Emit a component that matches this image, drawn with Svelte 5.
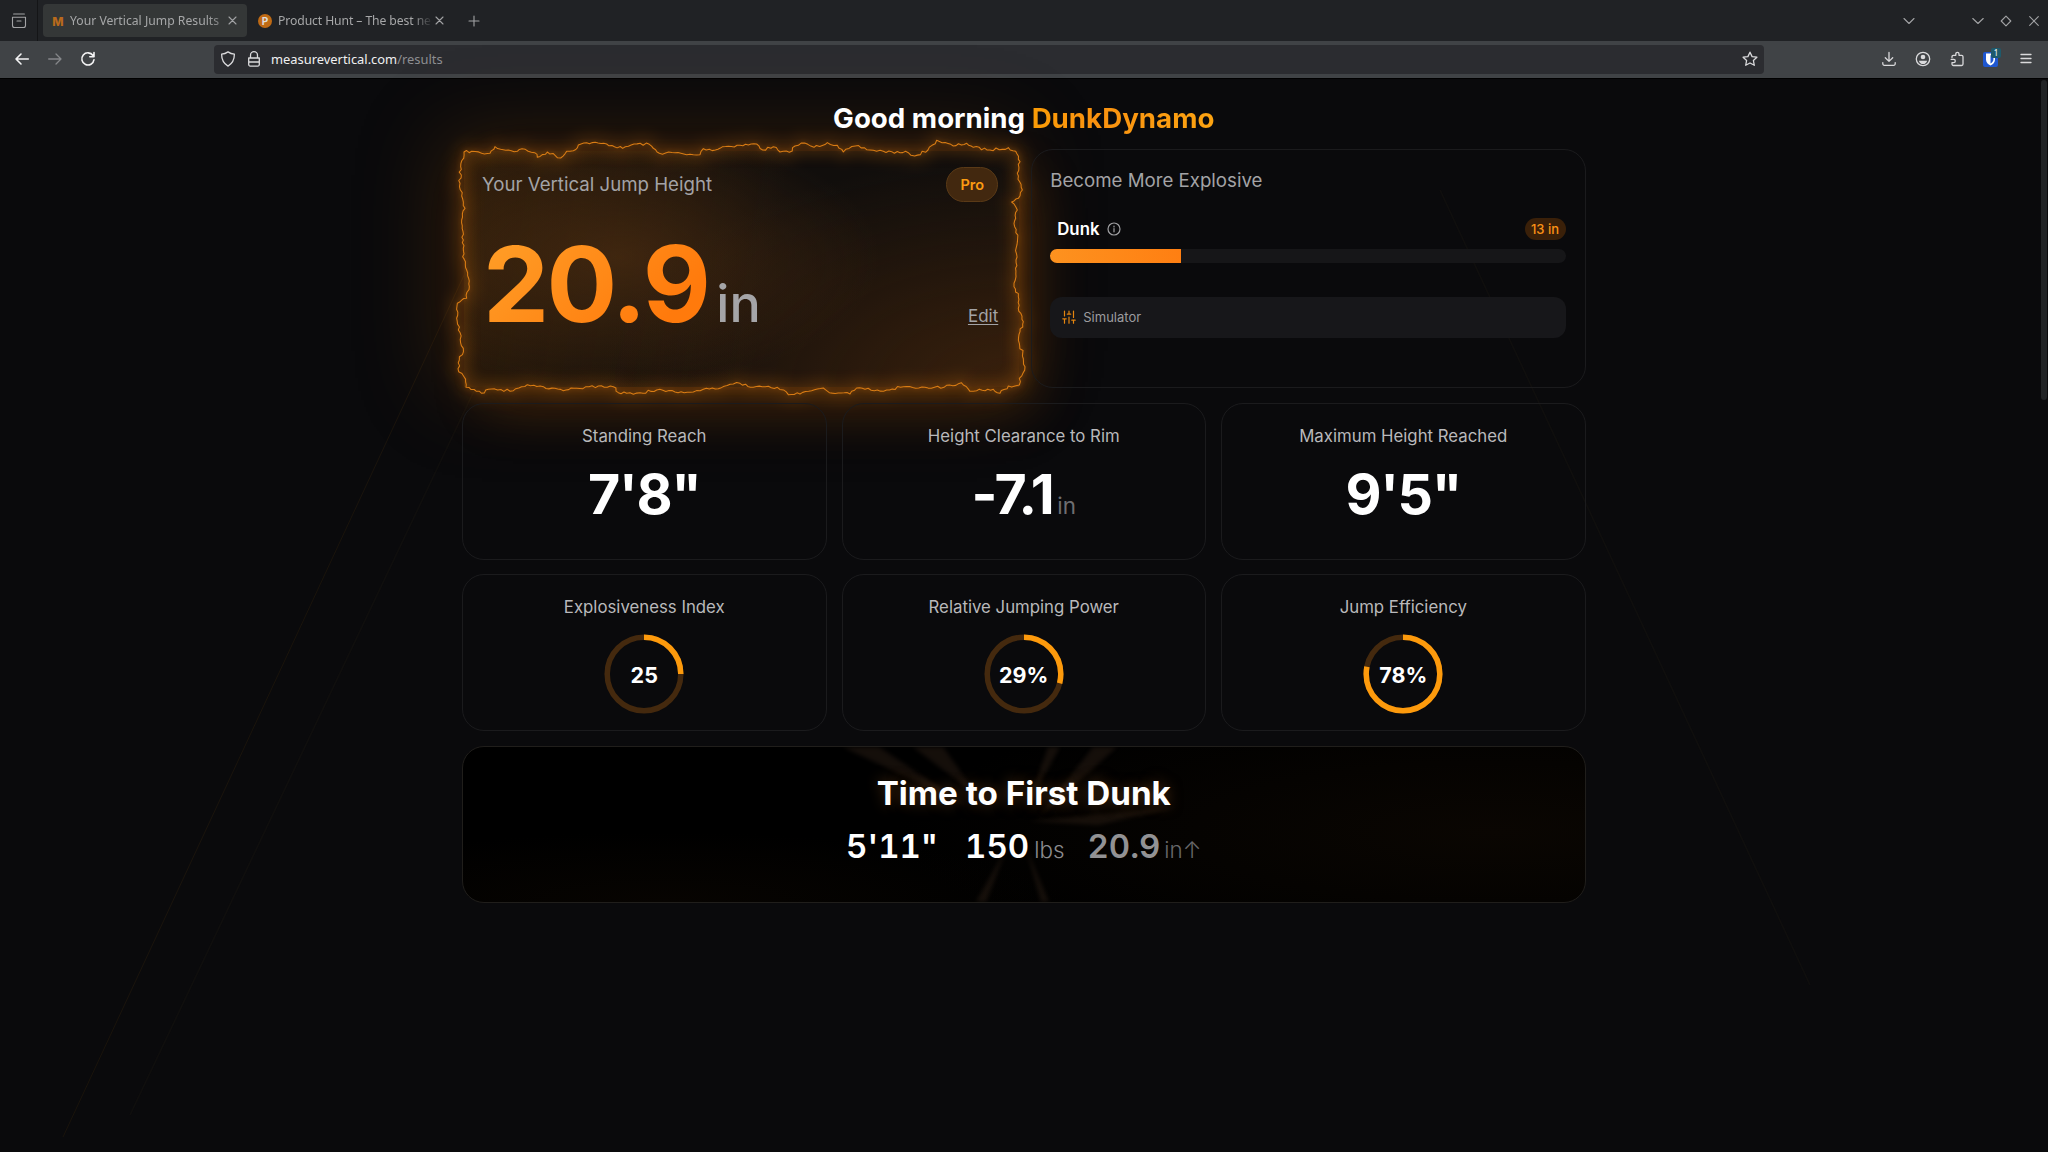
<script>
    const stats = [
        { label: 'Standing Reach', value: '7\'8"' },
        { label: 'Height Clearance to Rim', value: '-7.1', unit: 'in' },
        { label: 'Maximum Height Reached', value: '9\'5"' }
    ];

    const gauges = [
        { label: 'Explosiveness Index', percent: 25, text: '25' },
        { label: 'Relative Jumping Power', percent: 29, text: '29%' },
        { label: 'Jump Efficiency', percent: 78, text: '78%' }
    ];

    const dunkProgress = 25.4;

    const radius = 36.8;
    const circumference = 2 * Math.PI * radius;

    // corner points of the electric border, clockwise from top left
    const bolt = [
        [72,66],[95,64],[125,70],[150,70],[165,50],[182,58],[205,60],[232,64],[246,56],[284,68],[292,82],[322,66],[362,84],
        [380,64],[400,62],[415,45],[440,38],[500,42],[548,55],[582,42],[628,43],[640,55],[658,70],[705,68],[740,74],[780,74],
        [790,56],[826,60],[848,50],[900,46],[950,42],[968,60],[1000,50],[1020,66],[1048,67],[1065,48],[1094,39],[1122,52],
        [1162,38],[1192,46],[1210,66],[1246,48],[1290,60],[1330,64],[1380,68],[1405,68],[1424,78],[1464,60],[1476,46],
        [1490,31],[1540,48],[1580,40],[1600,52],[1650,60],[1705,53],[1727,64],
        [1740,95],[1732,130],[1747,180],[1735,205],[1715,216],[1732,240],[1724,290],[1733,325],[1728,390],[1728,440],
        [1722,470],[1735,500],[1735,535],[1750,575],[1740,605],[1738,640],[1748,670],[1755,710],[1738,745],[1738,765],
        [1725,768],[1705,768],[1680,790],[1660,778],[1610,782],[1590,784],[1564,758],[1512,772],[1455,772],[1390,770],
        [1340,780],[1275,778],[1250,774],[1230,792],[1168,788],[1150,774],[1080,792],[1045,794],[1012,772],[940,772],
        [900,760],[880,762],[835,776],[790,778],[760,786],[705,786],[650,780],[600,788],[560,790],[535,788],[520,770],
        [475,768],[410,775],[370,782],[310,770],[262,764],[220,782],[145,778],[125,790],[78,772],
        [72,740],[56,725],[58,690],[70,655],[55,600],[52,520],[80,505],[88,470],[80,420],[68,380],[70,330],[65,270],
        [75,235],[60,160],[62,110]
    ];

    // splits each segment and nudges the new points sideways
    function jagged(points) {
        let seed = 7;
        const random = () => {
            seed = (seed * 16807) % 2147483647;
            return seed / 2147483647 - 0.5;
        };
        const out = [];
        points.forEach(([x, y], i) => {
            const [nx, ny] = points[(i + 1) % points.length];
            const length = Math.hypot(nx - x, ny - y);
            const steps = Math.max(1, Math.round(length / 9));
            out.push([x, y]);
            for (let s = 1; s < steps; s++) {
                const t = s / steps;
                const push = random() * 8;
                out.push([
                    x + (nx - x) * t - ((ny - y) / length) * push,
                    y + (ny - y) * t + ((nx - x) / length) * push
                ]);
            }
        });
        return 'M' + out.map(p => p.map(n => n.toFixed(1)).join(' ')).join('L') + 'Z';
    }

    const boltPath = jagged(bolt);
</script>

<div class="window">
    <header class="tabs">
        <div class="tab-tools">
            <svg class="line" width="16" height="16" viewBox="0 0 16 16"><path d="M2.6 1h10.8M1.5 4.2h13v8.3a2 2 0 0 1-2 2h-9a2 2 0 0 1-2-2zM6 8h4" /></svg>
        </div>
        <div class="tab active">
            <svg class="favicon" width="14" height="14" viewBox="0 0 14 14"><text class="mark" x="1.3" y="11.6">M</text></svg>
            <span class="tab-title">Your Vertical Jump Results</span>
            <svg class="line" width="9" height="9" viewBox="0 0 9 9"><path d="M1 1l7 7M8 1l-7 7" /></svg>
        </div>
        <div class="tab">
            <span class="hunt">P</span>
            <span class="tab-title long">Product Hunt – The best ne</span>
            <svg class="line" width="9" height="9" viewBox="0 0 9 9"><path d="M1 1l7 7M8 1l-7 7" /></svg>
        </div>
        <svg class="line new-tab" width="12" height="12" viewBox="0 0 12 12"><path d="M6 1v10M1 6h10" /></svg>
        <div class="window-buttons">
            <svg class="line all-tabs" width="12" height="12" viewBox="0 0 12 12"><path d="M1 3.5l5 5 5-5" /></svg>
            <svg class="line" width="12" height="12" viewBox="0 0 12 12"><path d="M.8 3.5l5.2 5 5.2-5" /></svg>
            <svg class="line" width="12" height="12" viewBox="0 0 12 12"><path d="M6 1.2L10.8 6 6 10.8 1.2 6z" /></svg>
            <svg class="line" width="12" height="12" viewBox="0 0 12 12"><path d="M1.7 1.7l8.6 8.6M10.3 1.7l-8.6 8.6" /></svg>
        </div>
    </header>

    <nav class="toolbar">
        <div class="nav-buttons">
            <svg class="line bold" width="16" height="16" viewBox="0 0 16 16"><path d="M14.3 8H2M7 3L2 8l5 5" /></svg>
            <svg class="line dim" width="16" height="16" viewBox="0 0 16 16"><path d="M1.7 8H14M9 3l5 5-5 5" /></svg>
            <svg class="line bold" width="16" height="16" viewBox="0 0 16 16"><path d="M13 4.5A6.1 6.1 0 1 0 14 8.7M14 1.6v4.2H9.8" /></svg>
        </div>
        <div class="address">
            <svg class="line" width="16" height="16" viewBox="0 0 16 16"><path d="M8 .9c2 1.4 4.2 2.1 6.4 2.2 0 5.4-1.5 9.3-6.4 12C3.1 12.4 1.6 8.5 1.6 3.1 3.8 3 6 2.3 8 .9z" /></svg>
            <svg class="line" width="16" height="16" viewBox="0 0 16 16"><path d="M4.5 7V4.2a3.5 3.5 0 0 1 7 0V7M2.7 7h10.6v6.6a1.5 1.5 0 0 1-1.5 1.5H4.2a1.5 1.5 0 0 1-1.5-1.5zM3 11h10" /></svg>
            <span class="url">measurevertical.com<span class="path">/results</span></span>
            <svg class="line star" width="16" height="16" viewBox="0 0 16 16"><path d="M8 1.2l2.1 4.4 4.8.6-3.5 3.3.9 4.8L8 12l-4.3 2.3.9-4.8L1.1 6.2l4.8-.6z" /></svg>
        </div>
        <div class="actions">
            <svg class="line" width="16" height="16" viewBox="0 0 16 16"><path d="M8 1.5v8.8M4.3 6.8L8 10.4l3.7-3.6M1.8 11.6v1.2a1.5 1.5 0 0 0 1.5 1.5h9.4a1.5 1.5 0 0 0 1.5-1.5v-1.2" /></svg>
            <svg class="line" width="16" height="16" viewBox="0 0 16 16"><circle cx="8" cy="8" r="6.7" /><circle class="solid" cx="8" cy="6" r="2.3" /><path class="solid" d="M3.8 9.7h8.4c-.7 2.3-2.3 3.4-4.2 3.4s-3.5-1.1-4.2-3.4z" /></svg>
            <svg class="line" width="16" height="16" viewBox="0 0 16 16"><path d="M3 6.6V5.8c0-1 .5-1.5 1.4-1.5h2.4V2.9a1.6 1.6 0 0 1 3.2 0v1.4h2.6a1.4 1.4 0 0 1 1.4 1.4v7.4a1.4 1.4 0 0 1-1.4 1.4H4.4A1.4 1.4 0 0 1 3 13.1v-1.5h1.7a1.6 1.6 0 0 0 0-3.2H2.2" /></svg>
            <span class="vault">
                <svg width="15" height="15" viewBox="0 0 15 15"><rect width="15" height="15" rx="2" fill="#1f57d0" /><path d="M3 1.5h9v6c0 3-2 4.800-4.500 6C5 12.300 3 10.500 3 7.500z" fill="#fff" /><path d="M7.500 3.200h2.900v4.300c0 1.800-1.200 3-2.900 4z" fill="#1f57d0" /></svg>
                <span class="count">1</span>
            </span>
            <svg class="line" width="16" height="16" viewBox="0 0 16 16"><path d="M3 3.5h10M3 7.5h10M3 11.5h10" /></svg>
        </div>
    </nav>

    <main>
        <svg class="court" width="2048" height="1073" viewBox="0 79 2048 1073">
            <path d="M520 155L63 1137" />
            <path class="faint" d="M560 210L130 1115" />
            <path class="faint" d="M1440 190L1810 985" />
        </svg>
        <div class="scrollbar"></div>

        <h1>Good morning <span>DunkDynamo</span></h1>

        <div class="row two">
            <section class="hero">
                <div class="hero-fill"></div>
                <svg class="bolt" width="600" height="270" viewBox="0 0 1800 810">
                    <path class="glow wide" d={boltPath} />
                    <path class="glow" d={boltPath} />
                    <path d={boltPath} />
                </svg>
                <div class="hero-head">
                    <h2>Your Vertical Jump Height</h2>
                    <span class="pro">Pro</span>
                </div>
                <div class="hero-body">
                    <p class="jump"><b>20.9</b><span>in</span></p>
                    <a class="edit" href="#edit">Edit</a>
                </div>
            </section>

            <section class="card goals">
                <h2>Become More Explosive</h2>
                <div class="goal">
                    <strong>Dunk</strong>
                    <svg class="info" width="14" height="14" viewBox="0 0 14 14"><circle cx="7" cy="7" r="6" /><path d="M7 6.5v3.3M7 4.1v.8" /></svg>
                    <span class="remaining">13 in</span>
                </div>
                <div class="track"><div class="fill" style="width: {dunkProgress}%"></div></div>
                <button>
                    <svg width="14" height="14" viewBox="0 0 14 14"><path d="M2.5 1v5M2.5 9v4.2M7 1v3M7 7v6.2M11.5 1v6.5M11.5 10.5v2.7M.8 8.8h3.4M5.3 4.2h3.4M9.8 10.2h3.4" /></svg>
                    Simulator
                </button>
            </section>
        </div>

        <div class="row three">
            {#each stats as stat}
                <section class="card stat">
                    <h3>{stat.label}</h3>
                    <p>{stat.value}{#if stat.unit}<small>{stat.unit}</small>{/if}</p>
                </section>
            {/each}
        </div>

        <div class="row three">
            {#each gauges as gauge}
                <section class="card stat">
                    <h3>{gauge.label}</h3>
                    <div class="gauge">
                        <svg width="80" height="80" viewBox="0 0 80 80">
                            <circle cx="40" cy="40" r={radius} />
                            <circle
                                class="value"
                                cx="40"
                                cy="40"
                                r={radius}
                                stroke-dasharray="{circumference * gauge.percent / 100} {circumference}"
                            />
                        </svg>
                        <span>{gauge.text}</span>
                    </div>
                </section>
            {/each}
        </div>

        <section class="card dunk">
            <svg class="rays" width="1122" height="155" viewBox="0 0 1122 155">
                <path d="M450 0h30l36 50z" />
                <path d="M380 0h36l90 60z" />
                <path d="M585 0h12l-34 62z" />
                <path d="M630 0h24l-80 72z" />
                <path d="M565 74l150-14-80 18z" />
                <path d="M545 98l-32 57h10z" />
                <path d="M562 98l24 57h-8z" />
            </svg>
            <h2>Time to First Dunk</h2>
            <div class="facts">
                <span class="fact">5'11"</span>
                <span class="fact">150<small>lbs</small></span>
                <span class="fact muted">20.9<small>in↑</small></span>
            </div>
        </section>
    </main>
</div>

<style>
    :global(body) {
        margin: 0;
        background: #0a0a0c;
    }

    .window {
        display: flex;
        flex-direction: column;
        width: 2048px;
        height: 1152px;
        overflow: hidden;
        background: #0a0a0c;
        color: #fff;
        font-family: Inter, sans-serif;
    }

    h1, h2, h3, p {
        margin: 0;
    }

    .line {
        flex: none;
        fill: none;
        stroke: #dadadc;
        stroke-width: 1.3;
        stroke-linecap: round;
        stroke-linejoin: round;
    }

    .line.bold {
        stroke: #f4f4f5;
        stroke-width: 1.6;
    }

    .line.dim {
        stroke: #85878a;
    }

    .line .solid {
        fill: #dadadc;
        stroke: none;
    }

    /* browser chrome */
    .tabs {
        display: flex;
        align-items: center;
        height: 41px;
        background: #202225;
        font: 12.2px/16px 'Noto Sans', sans-serif;
        color: #a6a7a8;
    }

    .tabs .line {
        stroke: #a2a3a5;
        stroke-width: 1.1;
    }

    .tab-tools {
        display: flex;
        align-items: center;
        justify-content: center;
        width: 37px;
        height: 41px;
        margin-right: 5px;
        border-right: 1px solid #141517;
    }

    .tab {
        box-sizing: border-box;
        display: flex;
        align-items: center;
        width: 204px;
        height: 33px;
        margin-right: 3px;
        padding: 0 10px 0 8px;
        border-radius: 4px;
    }

    .tab.active {
        background: #343737;
    }

    .favicon,
    .hunt {
        flex: none;
        margin-right: 5px;
    }

    .mark {
        font: 800 12px Inter, sans-serif;
        fill: #b96a1c;
    }

    .hunt {
        width: 14px;
        height: 14px;
        margin-right: 6px;
        border-radius: 50%;
        background: #bf6a14;
        color: #ddd;
        font: 700 10px/14px Inter, sans-serif;
        text-align: center;
    }

    .tab-title {
        flex: 1;
        margin-right: 4px;
        white-space: nowrap;
        mask-image: linear-gradient(90deg, #000 88%, rgba(0, 0, 0, 0.5));
    }

    .tab-title.long {
        letter-spacing: -0.1px;
        mask-image: linear-gradient(90deg, #000 88%, rgba(0, 0, 0, 0.1));
    }

    .new-tab {
        margin-left: 11px;
    }

    .window-buttons {
        display: flex;
        gap: 16px;
        margin-left: auto;
        padding-right: 8px;
    }

    .all-tabs {
        margin-right: 41px;
    }

    .toolbar {
        box-sizing: border-box;
        display: flex;
        align-items: center;
        height: 38px;
        padding-bottom: 1px;
        background: #404346;
        border-bottom: 1px solid #000;
    }

    .nav-buttons {
        display: flex;
        gap: 17px;
        width: 200px;
        padding-left: 14px;
    }

    .address {
        box-sizing: border-box;
        display: flex;
        align-items: center;
        width: 1550px;
        height: 29px;
        padding: 0 6px;
        border-radius: 4px;
        background: #2b2c30;
    }

    .address .line + .line {
        margin-left: 10px;
    }

    .url {
        margin-left: 9px;
        color: #f0f0f1;
        font: 12.9px/18px 'Noto Sans', sans-serif;
    }

    .path {
        color: #8e8f92;
    }

    .address .star {
        margin-left: auto;
    }

    .actions {
        display: flex;
        align-items: center;
        gap: 18px;
        margin-left: auto;
        padding-right: 14px;
    }

    .vault {
        position: relative;
        display: flex;
        width: 15px;
        margin-right: 2px;
    }

    .count {
        position: absolute;
        top: -4px;
        right: -3px;
        width: 10px;
        height: 10px;
        border-radius: 2px;
        background: #1e5a6c;
        font: 8px/10px 'Noto Sans', sans-serif;
        text-align: center;
    }

    /* page */
    main {
        position: relative;
        flex: 1;
        padding: 18px 462.5px 0 462px;
    }

    .court {
        position: absolute;
        top: 0;
        left: 0;
        fill: none;
        stroke: #1a140c;
    }

    .court .faint {
        stroke: #100f0e;
        stroke-width: 1.5;
    }

    .scrollbar {
        position: absolute;
        top: 1px;
        right: 1px;
        width: 6px;
        height: 320px;
        border-radius: 3px;
        background: #212325;
    }

    h1 {
        position: relative;
        z-index: 1;
        margin-bottom: 9px;
        font-size: 27.7px;
        font-weight: 700;
        line-height: 43px;
        text-align: center;
    }

    h1 span {
        background: linear-gradient(90deg, #fb9c06, #fa9210 35%, #fca311);
        background-clip: text;
        color: transparent;
    }

    .row {
        display: grid;
        gap: 15px;
        margin-bottom: 14px;
    }

    .two {
        grid-template-columns: 1fr 1fr;
        height: 239px;
        margin-bottom: 15px;
    }

    .three {
        grid-template-columns: repeat(3, 1fr);
        height: 157px;
    }

    .card {
        position: relative;
        box-sizing: border-box;
        border: 1px solid #1b1b1d;
        border-radius: 22px;
    }

    h2 {
        color: #a3a3a6;
        font-size: 18.67px;
        font-weight: 400;
        line-height: 24px;
    }

    .hero {
        position: relative;
        box-sizing: border-box;
        display: flex;
        flex-direction: column;
        padding: 18px 18px 0 20px;
    }

    .hero-fill {
        position: absolute;
        inset: 2px -3px 1px 2px;
        background:
            radial-gradient(ellipse 260px 130px at 28% 45%, rgba(86, 50, 18, 0.6), transparent),
            radial-gradient(ellipse 420px 230px at 100% 100%, rgba(74, 40, 12, 0.7), transparent),
            linear-gradient(100deg, rgba(70, 40, 8, 0.5), transparent 55%),
            #110e0c;
        box-shadow:
            0 0 10px rgba(190, 95, 10, 0.16),
            -12px -6px 80px 10px rgba(150, 78, 8, 0.26),
            18px 26px 50px -6px rgba(170, 85, 8, 0.26),
            inset 0 0 18px rgba(170, 84, 8, 0.18);
    }

    .bolt {
        position: absolute;
        top: -19px;
        left: -22px;
        fill: none;
        overflow: visible;
        stroke: #d97c14;
        stroke-width: 3.2;
        stroke-linejoin: round;
    }

    .glow {
        opacity: 0.16;
        stroke-width: 9;
        filter: blur(6px);
    }

    .glow.wide {
        opacity: 0.15;
        stroke-width: 50;
        filter: blur(20px);
    }

    .hero-head,
    .hero-body {
        position: relative;
        display: flex;
        align-items: center;
        justify-content: space-between;
    }

    .pro {
        box-sizing: border-box;
        width: 52px;
        height: 35px;
        border: 1px solid #5a3a17;
        border-radius: 18px;
        background: #42280f;
        color: #fb9b12;
        font-size: 14.5px;
        font-weight: 600;
        line-height: 33px;
        text-align: center;
    }

    .hero-body {
        align-items: baseline;
        margin-top: 19px;
        padding-left: 1px;
    }

    .jump {
        font-size: 105px;
        line-height: 125px;
        white-space: nowrap;
    }

    .jump b {
        background: linear-gradient(135deg, #ff9a24 15%, #ff7a0c 80%);
        background-clip: text;
        color: transparent;
        font-weight: 700;
        letter-spacing: -0.025em;
    }

    .jump span {
        margin-left: 8px;
        color: #a5a5a8;
        font-size: 52px;
        font-weight: 500;
    }

    .edit {
        color: #a3a3a6;
        font-size: 17px;
        text-underline-offset: 2px;
    }

    .goals {
        display: flex;
        flex-direction: column;
        padding: 19px 19px 0 18px;
    }

    .goal {
        display: flex;
        align-items: center;
        height: 22px;
        margin-top: 25px;
        padding-left: 7px;
    }

    .goal strong {
        font-size: 16.8px;
        font-weight: 600;
    }

    .info,
    button svg {
        fill: none;
        stroke: #a0a0a3;
        stroke-width: 1.2;
        stroke-linecap: round;
    }

    .info {
        margin-left: 8px;
    }

    .remaining {
        width: 41px;
        height: 22px;
        margin-left: auto;
        border-radius: 11px;
        background: #3a2009;
        color: #fb9216;
        font-size: 13px;
        font-weight: 500;
        line-height: 22px;
        text-align: center;
    }

    .track {
        height: 14px;
        margin-top: 9px;
        border-radius: 7px;
        background: #161618;
        overflow: hidden;
    }

    .fill {
        height: 100%;
        background: linear-gradient(90deg, #fd921f, #ff7f12);
    }

    button {
        display: flex;
        align-items: center;
        gap: 7px;
        height: 41px;
        margin-top: 33.5px;
        padding: 0 12px;
        border: none;
        border-radius: 12px;
        background: #17171a;
        color: #9c9c9f;
        font: 13px Inter, sans-serif;
    }

    button svg {
        stroke: #e5850f;
    }

    .stat {
        display: flex;
        flex-direction: column;
        align-items: center;
        padding-top: 20px;
    }

    h3 {
        color: #b9b9bb;
        font-size: 16.8px;
        font-weight: 400;
        line-height: 24px;
    }

    .stat p {
        margin-top: 11px;
        font-size: 55.5px;
        font-weight: 700;
        letter-spacing: -0.025em;
        line-height: 70px;
    }

    .stat small {
        margin-left: 4px;
        color: #6e6e71;
        font-size: 22.4px;
        font-weight: 400;
        letter-spacing: 0;
    }

    .gauge {
        display: grid;
        place-items: center;
        margin-top: 15px;
    }

    .gauge > * {
        grid-area: 1 / 1;
    }

    .gauge svg {
        fill: none;
        stroke: #44290e;
        stroke-width: 5.5;
        transform: rotate(-90deg);
    }

    .gauge .value {
        stroke: #fd9a0c;
    }

    .gauge span {
        position: relative;
        top: 1px;
        font-size: 21.5px;
        font-weight: 700;
    }

    .dunk {
        display: flex;
        flex-direction: column;
        align-items: center;
        height: 157px;
        margin-top: 15px;
        padding-top: 25px;
        overflow: hidden;
        border-color: #201e1b;
        background:
            radial-gradient(ellipse 600px 140px at 92% 55%, #0a0602, transparent),
            radial-gradient(ellipse 400px 70px at 18% 100%, #070401, transparent),
            #000;
    }

    .rays {
        position: absolute;
        top: 0;
        left: 0;
        fill: #694a34;
        opacity: 0.2;
        filter: blur(2px);
    }

    .dunk h2,
    .facts {
        position: relative;
    }

    .dunk h2 {
        color: #fff;
        font-size: 33.2px;
        font-weight: 700;
        line-height: 42px;
        text-shadow: 0 0 14px rgba(140, 85, 35, 0.55);
    }

    .facts {
        display: flex;
        gap: 27px;
        margin-top: 8px;
        font-size: 33px;
        font-weight: 600;
        font-variant-numeric: tabular-nums;
        line-height: 48px;
    }

    .facts small {
        margin-left: 5px;
        color: #8c8c8e;
        font-size: 22.4px;
        font-weight: 300;
    }

    .facts .muted {
        margin-left: -4px;
        color: #929294;
    }

    .facts .muted small {
        margin-left: 4px;
        color: #68686a;
    }
</style>
